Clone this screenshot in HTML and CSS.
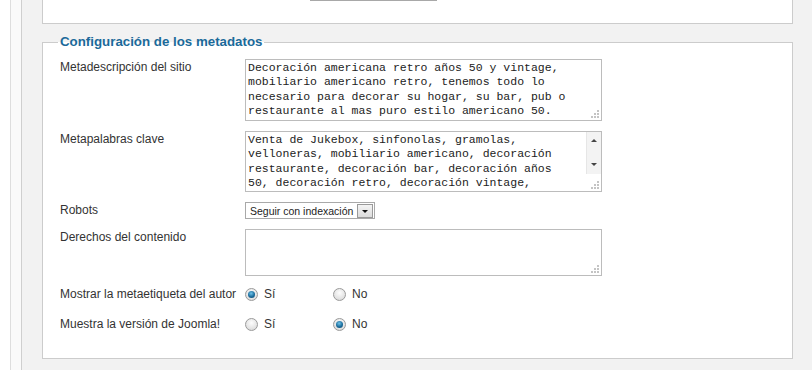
FILE: index.html
```html
<!DOCTYPE html>
<html lang="es">
<head>
    <meta charset="UTF-8">
    <title>Configuración de los metadatos</title>
    <link rel="stylesheet" href="styles.css">
</head>
<body>
    <div class="page">
        <div class="panel">
            <!-- end of the previous fieldset -->
            <div class="prev-fieldset">
                <div class="prev-input"></div>
            </div>

            <fieldset class="meta">
                <legend>Configuración de los metadatos</legend>

                <div class="row">
                    <label class="label" for="meta-desc">Metadescripción del sitio</label>
                    <div class="box box-desc">
                        <textarea id="meta-desc" class="text">Decoración americana retro años 50 y vintage, mobiliario americano retro, tenemos todo lo necesario para decorar su hogar, su bar, pub o restaurante al mas puro estilo americano 50.</textarea>
                        <span class="grip"></span>
                    </div>
                </div>

                <div class="row">
                    <label class="label" for="meta-keys">Metapalabras clave</label>
                    <div class="box box-keys">
                        <textarea id="meta-keys" class="text text-keys">Venta de Jukebox, sinfonolas, gramolas, velloneras, mobiliario americano, decoración restaurante, decoración bar, decoración años 50, decoración retro, decoración vintage, muebles retro</textarea>
                        <div class="scrollbar">
                            <span class="arrow-up"></span>
                            <span class="arrow-down"></span>
                        </div>
                        <span class="grip"></span>
                    </div>
                </div>

                <div class="row">
                    <label class="label">Robots</label>
                    <div class="select">
                        <span class="select-text">Seguir con indexación</span>
                        <span class="select-btn"><span class="caret"></span></span>
                    </div>
                </div>

                <div class="row">
                    <label class="label" for="rights">Derechos del contenido</label>
                    <div class="box box-rights">
                        <textarea id="rights" class="text"></textarea>
                        <span class="grip"></span>
                    </div>
                </div>

                <div class="row row-radio">
                    <span class="label">Mostrar la metaetiqueta del autor</span>
                    <div class="options">
                        <span class="option"><span class="radio checked"></span>Sí</span>
                        <span class="option"><span class="radio"></span>No</span>
                    </div>
                </div>

                <div class="row row-radio">
                    <span class="label">Muestra la versión de Joomla!</span>
                    <div class="options">
                        <span class="option"><span class="radio"></span>Sí</span>
                        <span class="option"><span class="radio checked"></span>No</span>
                    </div>
                </div>
            </fieldset>
        </div>
    </div>
</body>
</html>
```

FILE: styles.css
```css
html, body {
    margin: 0;
    padding: 0;
    height: 100%;
}
body {
    background: #fff;
    font-family: "Liberation Sans", Arial, sans-serif;
    font-size: 12px;
    color: #333;
    overflow: hidden;
}
.page {
    margin-left: 10px;
    border-left: 1px solid #dedede;
    background: #fafafa;
    padding-left: 10px;
    height: 100%;
}
.panel {
    border-left: 1px solid #cfcfcf;
    background: #f2f2f2;
    padding: 0 19px 0 20px;
    height: 100%;
}
.prev-fieldset {
    height: 23px;
    background: #fff;
    border: 1px solid #cccccc;
    border-top: none;
}
.prev-input {
    margin-left: 267px;
    width: 127px;
    border-bottom: 1px solid #a8a8a8;
}
.meta {
    margin: 10px 0 0;
    padding: 4px 0 17px 17px;
    border: 1px solid #cccccc;
    background: #fff;
    min-width: 0;
}
.meta legend {
    margin-left: -2px;
    padding: 0 2px;
    font-size: 13.3px;
    font-weight: bold;
    line-height: 16px;
    color: #1b6a9a;
}
.row {
    display: flex;
    align-items: flex-start;
    padding: 5px 0;
}
.label {
    width: 185px;
    flex: none;
    padding-top: 1px;
    line-height: 15px;
}
.box {
    position: relative;
    display: flex;
    width: 355px;
    border: 1px solid #bcbcbc;
    background: #fff;
}
.text {
    flex: 1;
    margin: 0;
    border: none;
    padding: 1px 2px;
    resize: none;
    overflow: hidden;
    font-family: "Liberation Mono", "Courier New", monospace;
    font-size: 11.5px;
    line-height: 14.3px;
    color: #222;
    background: transparent;
    outline: none;
}
.text-keys {
    padding-right: 14px;
}
.box-desc { height: 60px; }
.box-keys { height: 59px; }
.box-rights { height: 45px; }
.scrollbar {
    width: 15px;
    flex: none;
    height: 42px;
    background: #f3f3f3;
    border-left: 1px solid #e6e6e6;
    display: flex;
    flex-direction: column;
    align-items: center;
    justify-content: space-between;
    padding: 7px 0 8px;
    box-sizing: border-box;
}
.arrow-up, .arrow-down {
    width: 0;
    height: 0;
    border-left: 3px solid transparent;
    border-right: 3px solid transparent;
}
.arrow-up { border-bottom: 3px solid #444; }
.arrow-down { border-top: 3px solid #444; }
.grip {
    position: absolute;
    right: 2px;
    bottom: 2px;
    width: 2px;
    height: 2px;
    background: #c4c4c4;
    box-shadow: -3px 0 #c4c4c4, -6px 0 #c4c4c4, 0 -3px #c4c4c4, -3px -3px #c4c4c4, 0 -6px #c4c4c4;
}
.select {
    display: flex;
    align-items: center;
    width: 128px;
    height: 15px;
    border: 1px solid #a9a9a9;
    background: #fff;
    font-size: 10.5px;
    color: #222;
    white-space: nowrap;
}
.select-text {
    flex: 1;
    padding-left: 4px;
}
.select-btn {
    width: 14px;
    height: 12px;
    margin-right: 1px;
    border: 1px solid #9a9a9a;
    background: linear-gradient(#f4f4f4, #dcdcdc);
    display: flex;
    align-items: center;
    justify-content: center;
}
.caret {
    width: 0;
    height: 0;
    border-left: 3px solid transparent;
    border-right: 3px solid transparent;
    border-top: 3px solid #111;
    margin-top: 1px;
}
.row-radio {
    padding: 3px 0 7px;
}
.row-radio .label {
    padding-top: 0;
    line-height: 20px;
}
.options {
    display: flex;
    height: 20px;
    align-items: center;
}
.option {
    display: flex;
    align-items: center;
    width: 88px;
    font-size: 12px;
}
.radio {
    width: 11px;
    height: 11px;
    border: 1px solid #9a9a9a;
    border-radius: 50%;
    margin-right: 6px;
    background: radial-gradient(circle at 50% 35%, #fdfdfd, #dcdcdc 80%);
    box-sizing: content-box;
    position: relative;
}
.radio.checked::after {
    content: "";
    position: absolute;
    left: 2px;
    top: 2px;
    width: 7px;
    height: 7px;
    border-radius: 50%;
    background: radial-gradient(circle at 45% 35%, #6fc3ea, #1c6d9c 55%, #0d4267);
}
```
